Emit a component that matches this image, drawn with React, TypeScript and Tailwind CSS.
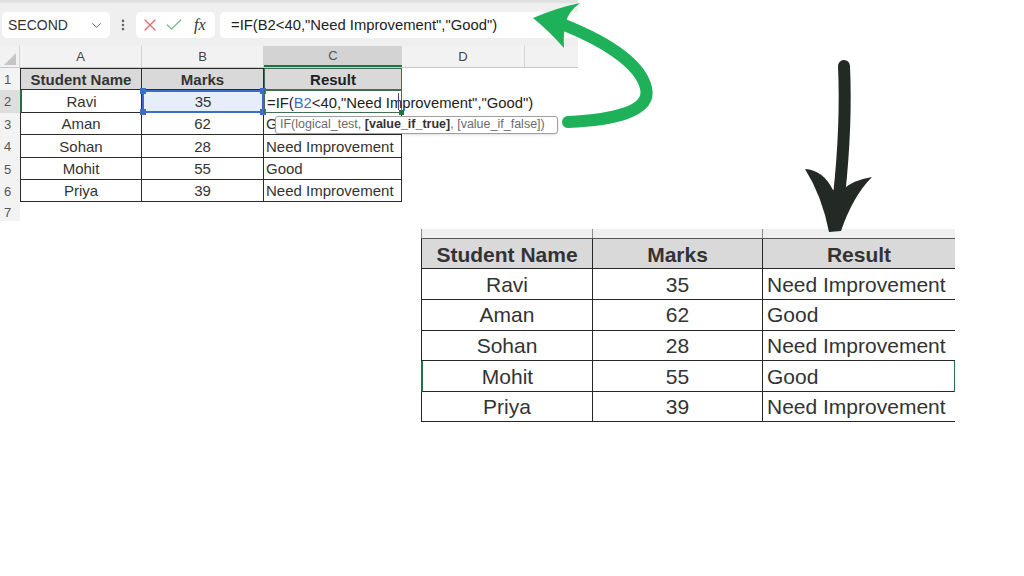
import { ChevronDown, EllipsisVertical, X, Check } from 'lucide-react';

const rows = [
  ['Ravi', '35', 'Need Improvement'],
  ['Aman', '62', 'Good'],
  ['Sohan', '28', 'Need Improvement'],
  ['Mohit', '55', 'Good'],
  ['Priya', '39', 'Need Improvement'],
];

function Toolbar() {
  return (
    <div className="h-[46px] bg-[#efefef] border-t-[3px] border-[#e2e2e2] flex items-start pt-[9px] pl-[2px]">
      <div className="w-[108px] h-[26px] bg-white rounded-[5px] flex items-center justify-between pl-[6px] pr-[6px]">
        <span className="text-[14px] text-[#333]">SECOND</span>
        <ChevronDown size={15} strokeWidth={1.5} className="text-[#555]" />
      </div>
      <div className="w-[26px] h-[26px] flex items-center justify-center">
        <EllipsisVertical size={14} strokeWidth={2.5} className="text-[#666]" />
      </div>
      <div className="w-[79px] h-[26px] bg-white rounded-[5px] flex items-center pl-[4px] gap-[4px]">
        <X size={20} strokeWidth={1.5} className="text-[#e06a6a]" />
        <Check size={20} strokeWidth={1.5} className="text-[#74b884]" />
        <span className="ml-[6px] font-['Liberation_Serif',serif] italic text-[16px] text-[#333]">fx</span>
      </div>
      <div className="ml-[5px] flex-1 h-[26px] bg-white rounded-l-[5px] flex items-center pl-[11px]">
        <span className="text-[14.8px] text-[#222] whitespace-nowrap">=IF(B2&lt;40,"Need Improvement","Good")</span>
      </div>
    </div>
  );
}

function ColumnHeaders() {
  return (
    <div className="h-[22px] flex bg-[#f2f2f2] border-b border-[#c8c8c8] text-[13px] text-[#444]">
      <div className="w-[20px] flex items-end justify-end pr-[3px] pb-[2px] border-r border-[#d4d4d4]">
        <div className="w-0 h-0 border-l-[12px] border-l-transparent border-b-[12px] border-b-[#c4c4c4]" />
      </div>
      <div className="w-[122px] flex items-center justify-center border-r border-[#d4d4d4]">A</div>
      <div className="w-[122px] flex items-center justify-center border-r border-[#d4d4d4]">B</div>
      <div className="w-[138px] flex items-center justify-center bg-[#d3d3d3] border-b-2 border-[#217346] text-[#555]">C</div>
      <div className="w-[123px] flex items-center justify-center border-r border-[#d4d4d4]">D</div>
      <div className="flex-1" />
    </div>
  );
}

function RowHead({ n, active = false }: { n: number; active?: boolean }) {
  return (
    <div
      className={`w-[20px] shrink-0 flex items-center pl-[4px] pt-[1px] text-[13px] text-[#555] ${
        active ? 'bg-[#dedede]' : 'bg-[#f3f3f3]'
      }`}
    >
      {n}
    </div>
  );
}

function Sheet() {
  const cell = 'flex items-center pt-[2px] border-r border-b border-[#2b2b2b] text-[15px] text-[#333]';
  return (
    <div className="w-[578px] bg-white">
      <Toolbar />
      <ColumnHeaders />

      <div className="h-[22.4px] flex">
        <RowHead n={1} />
        <div className={`${cell} w-[122px] justify-center border-l border-t bg-[#d9d9d9] font-bold text-[#222]`}>
          Student Name
        </div>
        <div className={`${cell} w-[122px] justify-center border-t bg-[#d9d9d9] font-bold text-[#222]`}>Marks</div>
        <div className="w-[138px] flex items-center justify-center pt-[2px] bg-[#d9d9d9] border border-[#3f6f52] font-bold text-[15px] text-[#222]">
          Result
        </div>
      </div>

      <div className="h-[22.4px] flex">
        <RowHead n={2} active />
        <div className={`${cell} w-[122px] justify-center border-l-2 border-l-[#217346]`}>Ravi</div>
        <div className="relative w-[122px] flex items-center justify-center pt-[2px] bg-[#e6eef9] border-2 border-[#3d6dc4] text-[15px] text-[#333]">
          35
          <span className="absolute -left-[4px] -top-[4px] w-[6px] h-[6px] bg-[#3d6dc4]" />
          <span className="absolute -right-[4px] -top-[4px] w-[6px] h-[6px] bg-[#3d6dc4]" />
          <span className="absolute -left-[4px] -bottom-[4px] w-[6px] h-[6px] bg-[#3d6dc4]" />
          <span className="absolute -right-[4px] -bottom-[4px] w-[6px] h-[6px] bg-[#3d6dc4]" />
        </div>
        <div className="relative w-[138px] flex items-center pl-[2px] pt-[2px] border border-[#3f6f52] text-[14.8px] text-[#222] whitespace-nowrap overflow-visible z-10">
          <span>
            =IF(<span className="text-[#3d6dc4]">B2</span>&lt;40,"Need Improvement","Good")
          </span>
          <span className="absolute right-[2px] top-[2px] w-px h-[17px] bg-[#4a3f80]" />
          <span className="absolute -right-[3px] -bottom-[3px] w-[5px] h-[5px] bg-[#217346]" />
        </div>
      </div>

      {rows.slice(1).map((r, i) => (
        <div key={r[0]} className="h-[22.4px] flex">
          <RowHead n={i + 3} />
          <div className={`${cell} w-[122px] justify-center border-l`}>{r[0]}</div>
          <div className={`${cell} w-[122px] justify-center`}>{r[1]}</div>
          <div className={`${cell} relative w-[138px] pl-[2px] whitespace-nowrap`}>
            {r[2]}
            {i === 0 && (
              <div className="absolute left-[11px] top-[3px] w-[283px] h-[18px] z-20 bg-white border border-[#a0a0a0] rounded-[3px] shadow-sm flex items-center pl-[4px] text-[12.5px] text-[#6b6b6b]">
                IF(logical_test,&nbsp;<b className="text-[#333]">[value_if_true]</b>, [value_if_false])
              </div>
            )}
          </div>
        </div>
      ))}

      <div className="h-[19px] flex">
        <RowHead n={7} />
      </div>
    </div>
  );
}

function ResultTable() {
  const cell = 'flex items-center pt-[1px] border-b border-[#262626] text-[21px] text-[#333]';
  return (
    <div className="ml-[421px] mt-[8px] w-[534px]">
      <div className="h-[10px] flex bg-[#efefef] border-b border-[#555]">
        <div className="w-[172px] border-l border-r border-[#8a8a8a]" />
        <div className="w-[170px] border-r border-[#8a8a8a]" />
        <div className="flex-1" />
      </div>
      <div className="h-[30px] flex bg-[#d9d9d9] font-bold text-[#222]">
        <div className={`${cell} w-[172px] justify-center border-l border-r text-[20.5px]`}>Student Name</div>
        <div className={`${cell} w-[170px] justify-center border-r text-[20.5px]`}>Marks</div>
        <div className={`${cell} flex-1 justify-center text-[20.5px]`}>Result</div>
      </div>
      {rows.map((r) => {
        const hl = r[0] === 'Mohit';
        return (
          <div key={r[0]} className="h-[30.6px] flex">
            <div className={`${cell} w-[172px] justify-center border-r ${hl ? 'border-l-2 border-l-[#217346]' : 'border-l'}`}>
              {r[0]}
            </div>
            <div className={`${cell} w-[170px] justify-center border-r`}>{r[1]}</div>
            <div className={`${cell} flex-1 pl-[4px] whitespace-nowrap ${hl ? 'border-r border-r-[#217346]' : ''}`}>
              {r[2]}
            </div>
          </div>
        );
      })}
    </div>
  );
}

function Arrows() {
  return (
    <svg className="absolute inset-0 pointer-events-none" width="1024" height="576" viewBox="0 0 1024 576">
      <path
        d="M568 122 C612 120 652 112 646 88 C640 62 602 40 562 24"
        fill="none"
        stroke="#1eb15a"
        strokeWidth="12"
        strokeLinecap="round"
      />
      <path d="M533 18 Q556 8 580 3 Q568 12 566 22 Q563 34 564 48 Q548 30 533 18 Z" fill="#1eb15a" />
      <path
        d="M844 66 C846 110 844 150 839 196"
        fill="none"
        stroke="#232925"
        strokeWidth="12"
        strokeLinecap="round"
      />
      <path
        d="M805 169 Q823 170 833 190 L842 190 Q853 180 872 177 Q853 196 841 231 L829 232 Q822 196 805 169 Z"
        fill="#232925"
      />
    </svg>
  );
}

export default function App() {
  return (
    <div className="relative w-[1024px] h-[576px] bg-white overflow-hidden font-['Liberation_Sans',Arial,sans-serif]">
      <Sheet />
      <ResultTable />
      <Arrows />
    </div>
  );
}
